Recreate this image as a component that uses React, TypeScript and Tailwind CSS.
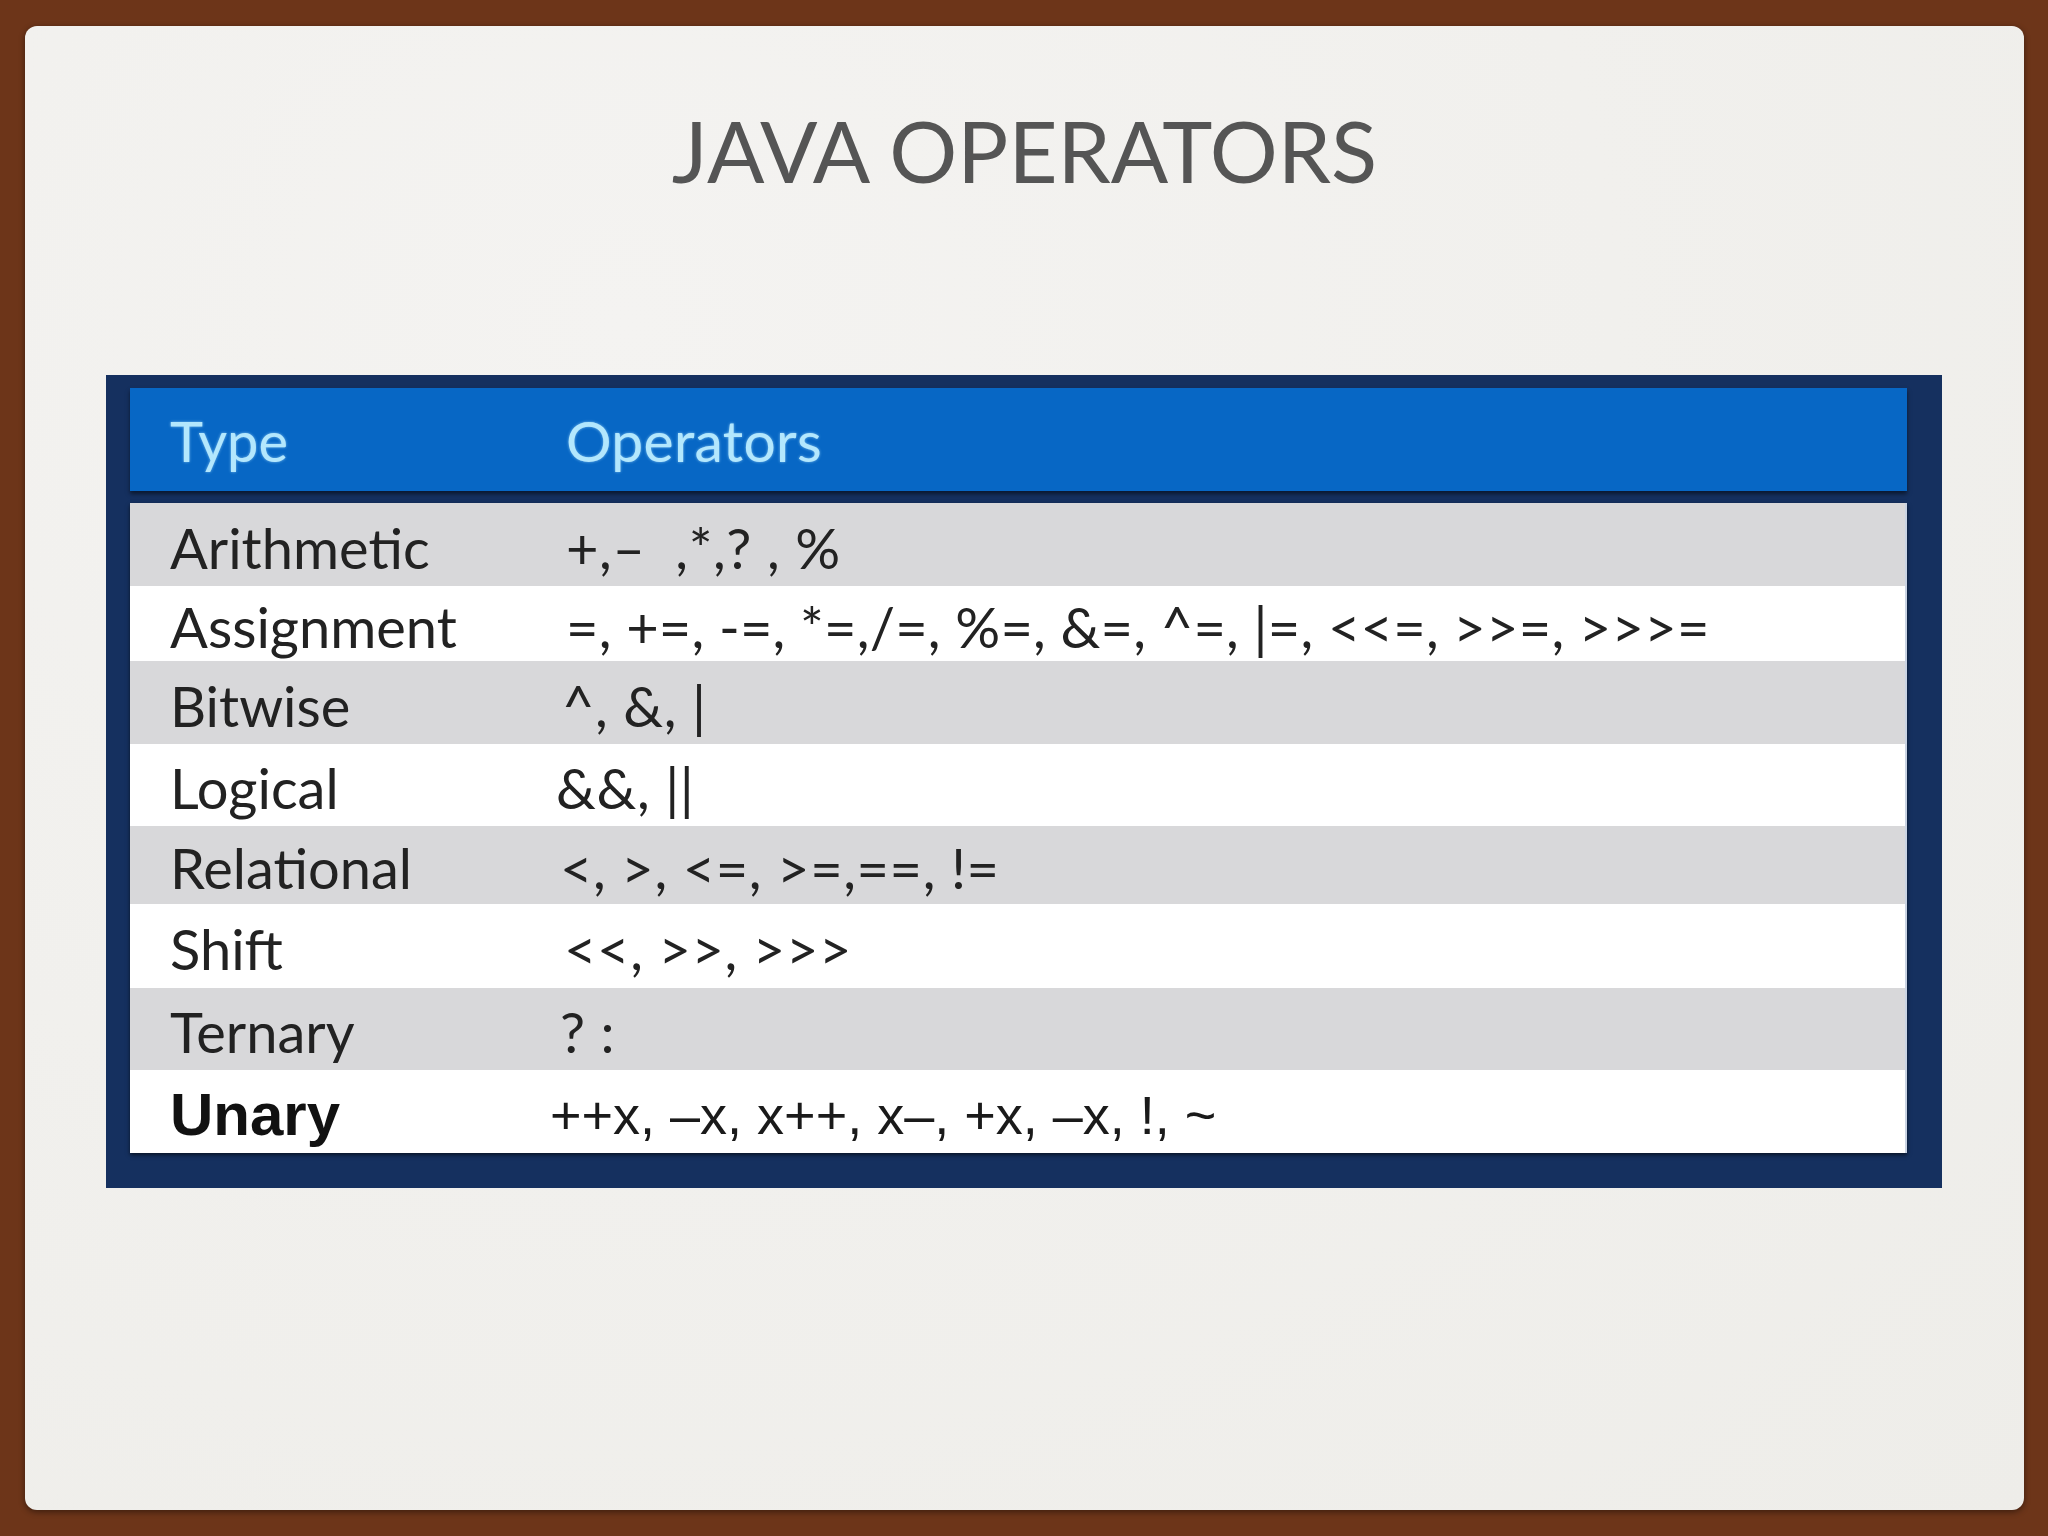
import React from "react";

const rows: { type: string; ops: string; h: number; off: string; bg: string; unary?: boolean; track?: string }[] = [
  { type: "Arithmetic", ops: "+,–\u00a0\u00a0,*,?\u00a0, %", h: 83, off: "ml-0", bg: "bg-[#d8d8da]" },
  { type: "Assignment", ops: "=, +=, -=, *=,/=, %=, &=, ^=, |=, <<=, >>=, >>>=", h: 75, off: "ml-0", bg: "bg-white", track: "tracking-[0.2px]" },
  { type: "Bitwise", ops: "^, &, |", h: 83, off: "ml-[-4px]", bg: "bg-[#d8d8da]" },
  { type: "Logical", ops: "&&, ||", h: 82, off: "ml-[-10px]", bg: "bg-white" },
  { type: "Relational", ops: "<, >, <=, >=,==, !=", h: 78, off: "ml-[-6px]", bg: "bg-[#d8d8da]" },
  { type: "Shift", ops: "<<, >>, >>>", h: 84, off: "ml-[-2px]", bg: "bg-white" },
  { type: "Ternary", ops: "? :", h: 82, off: "ml-[-6px]", bg: "bg-[#d8d8da]" },
  { type: "Unary", ops: "++x, –x, x++, x–, +x, –x, !, ~", h: 83, off: "ml-[-16px]", bg: "bg-white", unary: true },
];

export default function App() {
  return (
    <div className="w-[2048px] h-[1536px] bg-[#6d3519] p-[25px] pt-[26px] pr-[24px]">
      <div className="h-[1484px] w-full rounded-[12px] bg-[#f1f0ed] shadow-[0_2px_6px_rgba(0,0,0,0.45)] flex flex-col bg-[radial-gradient(ellipse_at_30%_20%,#f4f3f1,#eeede9)]">
        <h1 className="pt-[82px] text-center text-[85px] leading-none tracking-normal text-[#555555] font-normal font-['Lato','Open_Sans',sans-serif]">
          JAVA OPERATORS
        </h1>
        <div className="mt-[182px] ml-[81px] w-[1836px] bg-[#15305f] pt-[13px] pl-[24px] pr-[35px] pb-[35px]">
          <div className="h-[103px] bg-[#0767c5] flex items-center shadow-[0_3px_4px_rgba(0,0,0,0.5)]">
            <div className="w-[436px] pl-[40px] pt-[2px] text-[56px] leading-none text-[#b3e7fd] font-['Lato',sans-serif] [text-shadow:0_0_3px_rgba(170,225,255,0.7)]">
              Type
            </div>
            <div className="pt-[2px] text-[57px] leading-none tracking-[0.3px] text-[#b3e7fd] font-['Lato',sans-serif] [text-shadow:0_0_3px_rgba(170,225,255,0.7)]">
              Operators
            </div>
          </div>
          <div className="mt-[12px] flex flex-col border-r-2 border-[#c9d3e3] shadow-[0_2px_4px_rgba(0,0,0,0.6)]">
            {rows.map((r) => (
              <div key={r.type} className={`flex items-center ${r.bg}`} style={{ height: r.h }}>
                <div
                  className={
                    r.unary
                      ? "w-[436px] pl-[40px] pt-[6px] text-[60px] leading-none text-[#111] font-bold font-['Liberation_Sans',Arial,sans-serif]"
                      : "w-[436px] pl-[40px] pt-[6px] text-[56px] leading-none text-[#222] font-['Lato',sans-serif]"
                  }
                >
                  {r.type}
                </div>
                <div
                  className={
                    r.unary
                      ? `${r.off} pt-[6px] text-[54px] leading-none text-[#1a1a1a] font-['Liberation_Sans',Arial,sans-serif]`
                      : `${r.off} ${r.track ?? "tracking-[0.6px]"} pt-[6px] text-[56px] leading-none text-[#222] font-['Lato',sans-serif]`
                  }
                >
                  {r.ops}
                </div>
              </div>
            ))}
          </div>
        </div>
      </div>
    </div>
  );
}
